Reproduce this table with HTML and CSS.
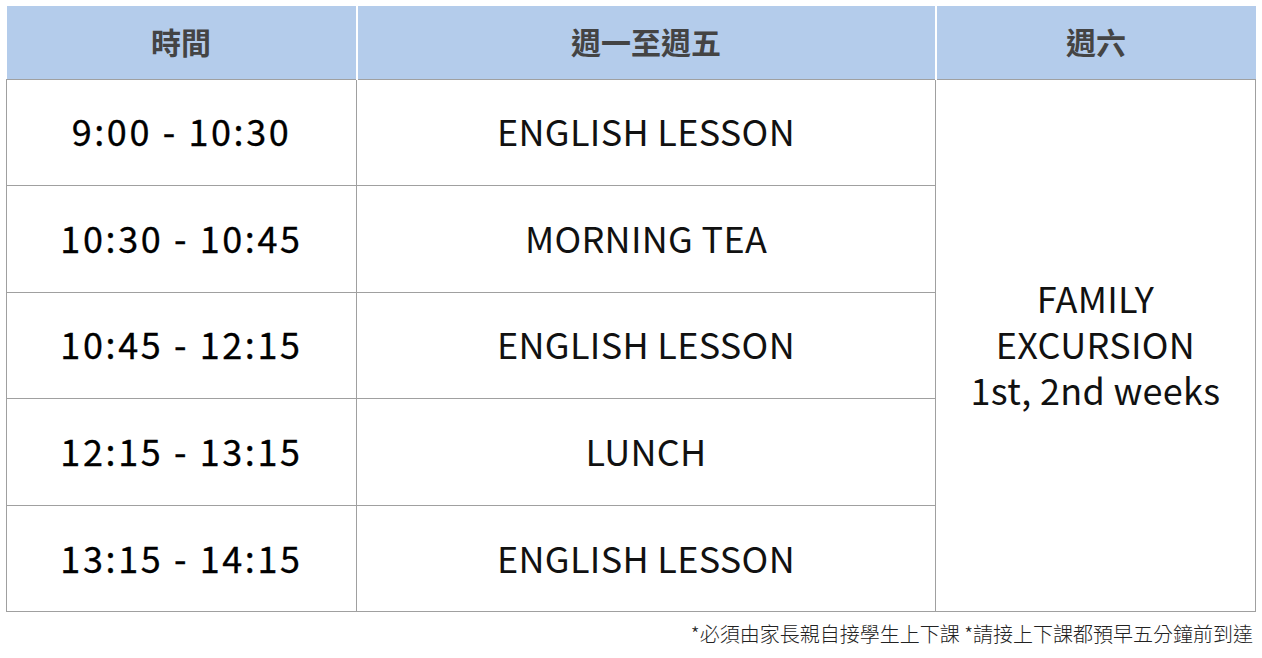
FILE: index.html
```html
<!DOCTYPE html>
<html lang="zh-Hant">
<head>
<meta charset="utf-8">
<link rel="stylesheet" href="styles.css">
</head>
<body>
<div class="page">
  <table class="schedule">
    <colgroup>
      <col class="c-time">
      <col class="c-week">
      <col class="c-sat">
    </colgroup>
    <thead>
      <tr class="head-row">
        <th>時間</th>
        <th>週一至週五</th>
        <th>週六</th>
      </tr>
    </thead>
    <tbody>
      <tr>
        <td class="time">9:00 - 10:30</td>
        <td>ENGLISH LESSON</td>
        <td class="sat" rowspan="5"><span class="line">FAMILY</span><span class="line">EXCURSION</span><span class="line">1st, 2nd weeks</span></td>
      </tr>
      <tr>
        <td class="time">10:30 - 10:45</td>
        <td>MORNING TEA</td>
      </tr>
      <tr>
        <td class="time">10:45 - 12:15</td>
        <td>ENGLISH LESSON</td>
      </tr>
      <tr>
        <td class="time">12:15 - 13:15</td>
        <td>LUNCH</td>
      </tr>
      <tr>
        <td class="time">13:15 - 14:15</td>
        <td>ENGLISH LESSON</td>
      </tr>
    </tbody>
  </table>
  <p class="note">*必須由家長親自接學生上下課 *請接上下課都預早五分鐘前到達</p>
</div>
</body>
</html>
```
FILE: styles.css
```css
html, body {
  margin: 0;
  padding: 0;
  background: #ffffff;
}
.page {
  padding: 6px 7px 0 6px;
  font-family: "Noto Sans CJK TC", "Noto Sans", sans-serif;
}
.schedule {
  width: 1249px;
  border-collapse: collapse;
  table-layout: fixed;
}
.c-time { width: 350px; }
.c-week { width: 579px; }
.c-sat { width: 320px; }
.schedule th {
  background: #b4cceb;
  color: #444444;
  font-size: 30px;
  font-weight: 700;
  line-height: 36px;
  height: 73px;
  box-sizing: border-box;
  padding: 0 0 2px 0;
  text-align: center;
  border-left: 2px solid #ffffff;
  border-right: 2px solid #ffffff;
}
.schedule th:first-child { border-left: none; }
.schedule th:last-child { border-right: none; }
.schedule td {
  border: 1px solid #a0a0a0;
  height: 106.6px;
  box-sizing: border-box;
  padding: 0 0 4px 0;
  text-align: center;
  color: #111111;
  font-size: 36px;
  font-weight: 400;
  line-height: 44px;
  letter-spacing: 0.3px;
}
.schedule td.time {
  color: #000000;
  letter-spacing: 2.6px;
  -webkit-text-stroke: 0.3px #000000;
}
.schedule td.sat {
  padding: 0 0 4px 0;
}
.line {
  display: block;
  line-height: 46px;
}
.note {
  margin: 8px 2px 0 0;
  text-align: right;
  font-size: 20px;
  font-weight: 300;
  color: #222222;
  line-height: 28px;
}
```
